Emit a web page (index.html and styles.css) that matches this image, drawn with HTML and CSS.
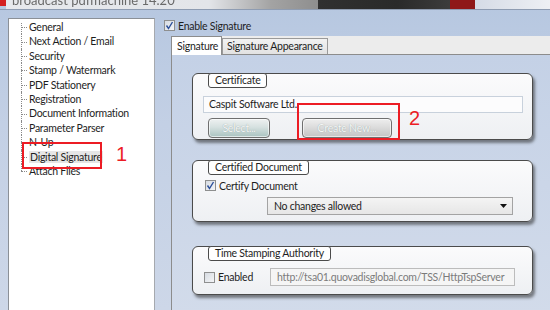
FILE: index.html
```html
<!DOCTYPE html>
<html lang="en">
  <head>
    <meta charset="UTF-8" />
    <title>pdfMachine - Digital Signature</title>
    <link rel="stylesheet" href="styles.css">
  </head>
  <body>
    <div class="titlebar">
      <span class="app-icon"></span>
      <span class="title-area"><span class="title">broadcast pdfmachine 14.20</span></span>
      <span class="tb-dark"></span>
      <span class="tb-red"></span>
      <span class="tb-light"></span>
    </div>

    <div class="main">
      <div class="tree">
        <ul>
          <li>General</li>
          <li>Next Action / Email</li>
          <li>Security</li>
          <li>Stamp / Watermark</li>
          <li>PDF Stationery</li>
          <li>Registration</li>
          <li>Document Information</li>
          <li>Parameter Parser</li>
          <li>N-Up</li>
          <li><span class="selected">Digital Signature</span></li>
          <li>Attach Files</li>
        </ul>
      </div>

      <div class="right">
        <div class="check-row enable">
          <span class="cb checked"><svg width="9" height="9" viewBox="0 0 9 9"><path d="M1.5 4.5 L3.5 7.5 L7.5 1" fill="none" stroke="#2b4f9a" stroke-width="1.4"/></svg></span>
          <span>Enable Signature</span>
        </div>

        <div class="tabs">
          <span class="tab active">Signature</span>
          <span class="tab">Signature Appearance</span>
        </div>

        <div class="panel">
          <div class="group g-cert">
            <div class="legend">Certificate</div>
            <div class="field">Caspit Software Ltd.</div>
            <div class="buttons">
              <span class="btn btn-select">Select...</span>
              <span class="btn btn-create">Create New...</span>
            </div>
          </div>

          <div class="group g-certified">
            <div class="legend">Certified Document</div>
            <div class="check-row certify">
              <span class="cb checked"><svg width="9" height="9" viewBox="0 0 9 9"><path d="M1.5 4.5 L3.5 7.5 L7.5 1" fill="none" stroke="#2b4f9a" stroke-width="1.4"/></svg></span>
              <span>Certify Document</span>
            </div>
            <div class="select">
              <span>No changes allowed</span>
              <svg width="7" height="4" viewBox="0 0 7 4"><polygon points="0,0 7,0 3.5,4" fill="#111"/></svg>
            </div>
          </div>

          <div class="group g-time">
            <div class="legend">Time Stamping Authority</div>
            <div class="ts-row">
              <div class="check-row ts-check">
                <span class="cb"></span>
                <span>Enabled</span>
              </div>
              <div class="url">http://tsa01.quovadisglobal.com/TSS/HttpTspServer</div>
            </div>
          </div>

          <div class="group g-more">
            <div class="check-row more-check">
              <span class="cb"></span>
            </div>
          </div>
        </div>
      </div>
    </div>

    <!-- annotation marks drawn over the screenshot -->
    <div class="mark mark-1"></div>
    <div class="mark-num num-1">1</div>
    <div class="mark mark-2"></div>
    <div class="mark-num num-2">2</div>
  </body>
</html>
```

FILE: styles.css
```css
* {
  margin: 0;
  padding: 0;
  box-sizing: border-box;
}

html, body {
  width: 550px;
  height: 310px;
  overflow: hidden;
}

body {
  position: relative;
  font-family: 'Lato', 'Liberation Sans', sans-serif;
  font-size: 10.5px;
  letter-spacing: -0.25px;
  color: #1e1e1e;
  background: linear-gradient(180deg, #b6c7e0 0%, #c3d0e5 40%, #cdd7e8 100%);
}

/* title bar, mostly cut off */
.titlebar {
  display: flex;
  height: 10px;
  border-bottom: 1px solid #8e9cb2;
  overflow: hidden;
}

.app-icon {
  width: 6px;
  height: 6px;
  background: #d42020;
}

.title-area {
  width: 312px;
  background: linear-gradient(90deg, #e7e9ed 0%, #e3e5e9 65%, #a3a3a3 85%, #8e8e8e 100%);
  padding-left: 6px;
}

.title {
  display: block;
  margin-top: -8px;
  font-size: 13px;
  letter-spacing: 0;
  color: #6a6a6a;
  filter: blur(0.7px);
  white-space: nowrap;
}

.tb-dark {
  width: 132px;
  background: linear-gradient(90deg, #303030, #2a2a2a 60%, #3c3c3c);
}

.tb-red {
  width: 25px;
  background: #8f1818;
}

.tb-light {
  flex: 1;
  background: linear-gradient(90deg, #d5dbe6, #eef0f4);
}

.main {
  display: flex;
  padding: 8px 0 0 8px;
}

/* left navigation tree */
.tree {
  width: 147px;
  height: 300px;
  background: #fff;
  border: 1px solid #8b9097;
  border-right-color: #a6a9ae;
}

.tree ul {
  list-style: none;
  padding: 1px 0 0 12px;
}

.tree li {
  position: relative;
  height: 14.4px;
  line-height: 14.4px;
  padding-left: 8px;
  white-space: nowrap;
}

.tree li::before {
  content: '';
  position: absolute;
  left: 0;
  top: 50%;
  width: 6px;
  border-top: 1px dotted #8a8a8a;
}

.tree li::after {
  content: '';
  position: absolute;
  left: 0;
  top: 0;
  bottom: 0;
  border-left: 1px dotted #8a8a8a;
}

.tree li:first-child::after {
  top: 3px;
}

.tree li:last-child::after {
  bottom: 50%;
}

.selected {
  background: #e6e6e6;
  padding: 0 1px;
}

/* right side */
.right {
  flex: 1;
  margin-left: 9px;
}

.check-row {
  display: flex;
  align-items: center;
  gap: 3px;
  height: 13px;
}

.enable {
  margin-top: 1px;
  height: 13px;
}

.cb {
  display: inline-flex;
  align-items: center;
  justify-content: center;
  width: 11px;
  height: 11px;
  border: 1px solid #8e8f8f;
  background: linear-gradient(135deg, #d6dbe2 0%, #f4f5f7 100%);
}

.tabs {
  display: flex;
  align-items: flex-end;
  height: 18px;
  margin: 4px 0 0 7px;
  background: #ececec;
}

.tab {
  height: 16px;
  line-height: 15px;
  padding: 0 4px;
  border: 1px solid #9a9a9a;
  border-bottom: none;
  background: linear-gradient(#f2f2f2, #e2e2e2);
}

.tab.active {
  width: 51px;
  height: 19px;
  margin-bottom: -1px;
  line-height: 18px;
  padding-left: 5px;
  background: #fff;
  border-color: #8c8c8c;
  position: relative;
}

.panel {
  height: 260px;
  margin-left: 7px;
  padding: 18px 0 0 20px;
  border-top: 1px solid #8c8c8c;
  border-left: 1px solid #8c8c8c;
  background: linear-gradient(180deg, #c4d1e6 0%, #d2dbea 100%);
}

/* group boxes */
.group {
  width: 341px;
  padding: 0 9px 1px 10px;
  border: 1px solid #4b4b4b;
  border-radius: 6px;
  background: linear-gradient(180deg, #fbfbfc 0%, #eef0f3 100%);
  box-shadow: 2px 3px 3px rgba(40, 40, 40, 0.55);
}

.legend {
  display: inline-block;
  height: 15px;
  margin: -9px 0 0 5px;
  padding: 0 6px;
  line-height: 13px;
  background: #fff;
  border: 1px solid #4b4b4b;
  border-radius: 3px;
}

.field {
  height: 17px;
  margin-top: 8px;
  padding-left: 5px;
  line-height: 15px;
  background: #fcfcfd;
  border: 1px solid #c8d1dc;
}

.buttons {
  display: flex;
  gap: 32px;
  margin-top: 5px;
  padding-left: 5px;
}

.btn {
  height: 20px;
  line-height: 18px;
  text-align: center;
  color: #f4f6f6;
  text-shadow: 0 0 1px #8a9a9a;
  border: 1px solid #6f6f6f;
  border-radius: 4px;
  box-shadow: inset 0 0 0 1px rgba(255, 255, 255, 0.6);
}

.btn-select {
  width: 62px;
  background: linear-gradient(180deg, #eef1f1 0%, #d6e1e0 45%, #a9c3c0 100%);
}

.btn-create {
  width: 90px;
  background: linear-gradient(180deg, #eeeeee 0%, #dcdcdc 45%, #c4c4c4 100%);
}

.g-certified {
  margin-top: 20px;
  padding-bottom: 6px;
}

.certify {
  margin-top: 4px;
  padding-left: 2px;
}

.select {
  display: flex;
  align-items: center;
  justify-content: space-between;
  width: 246px;
  height: 18px;
  margin: 5px 0 0 64px;
  padding: 0 5px 0 6px;
  border: 1px solid #a3a3a3;
  background: linear-gradient(180deg, #f4f4f4 0%, #e6e6e6 100%);
}

.g-time {
  margin-top: 24px;
  padding-bottom: 8px;
}

.ts-row {
  display: flex;
  align-items: center;
  height: 18px;
  margin-top: 7px;
  padding-left: 1px;
}

.ts-check {
  width: 66px;
}

.url {
  width: 245px;
  height: 18px;
  padding-left: 6px;
  line-height: 16px;
  color: #7b7b7b;
  background: #f5f5f5;
  border: 1px solid #bcbcbc;
  white-space: nowrap;
}

.g-more {
  height: 40px;
  margin-top: 24px;
}

.more-check {
  margin-top: 10px;
  padding-left: 2px;
}

/* red annotation overlays */
.mark {
  position: absolute;
  border: 2px solid #ec1c24;
}

.mark-1 {
  left: 22px;
  top: 142px;
  width: 80px;
  height: 27px;
}

.mark-2 {
  left: 297px;
  top: 103px;
  width: 103px;
  height: 37px;
}

.mark-num {
  position: absolute;
  font-family: 'Liberation Sans', sans-serif;
  font-size: 20px;
  line-height: 20px;
  letter-spacing: 0;
  color: #ec1c24;
}

.num-1 {
  left: 116px;
  top: 144px;
}

.num-2 {
  left: 409px;
  top: 108px;
}
```
